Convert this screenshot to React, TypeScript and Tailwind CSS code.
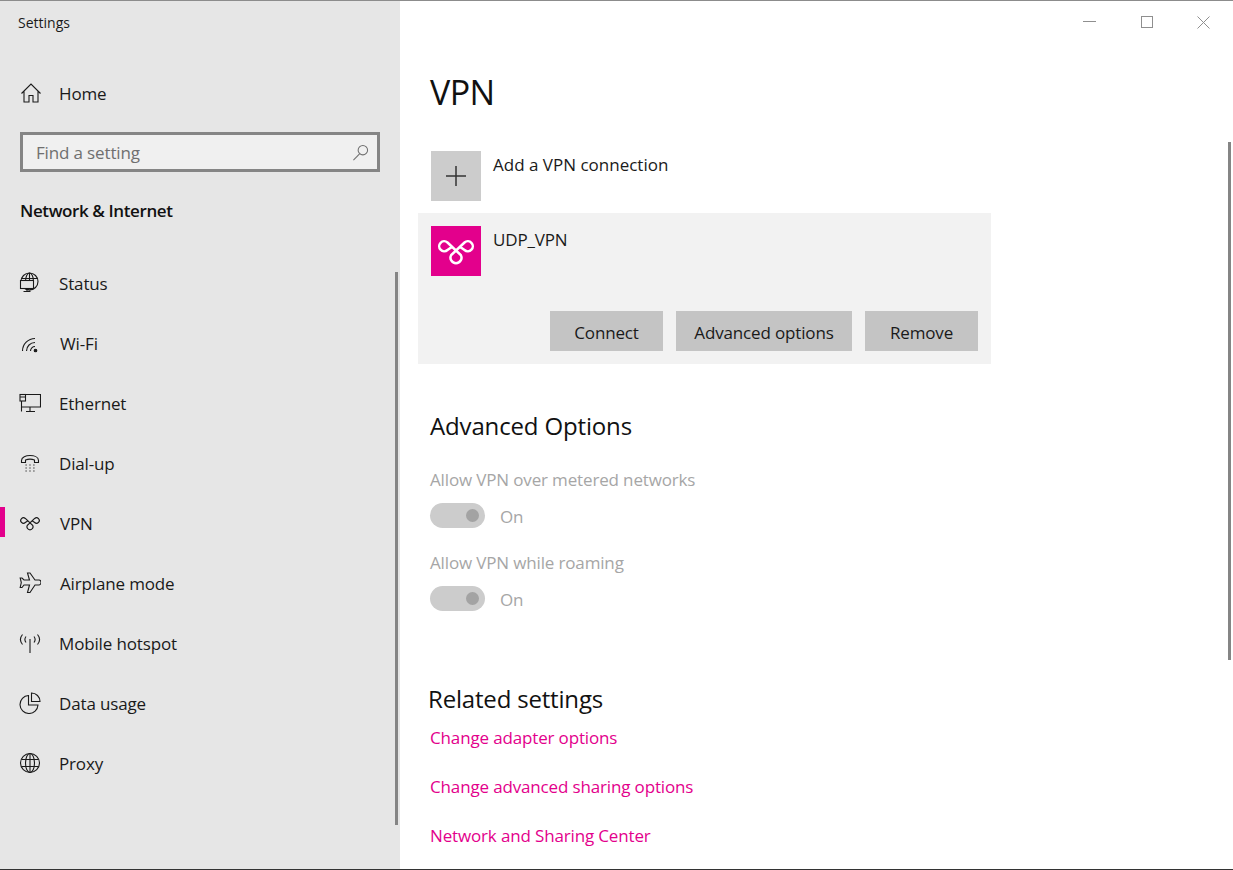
import React from 'react';

const ICON = 'w-[22px] h-[22px] mt-[2px] shrink-0 fill-none stroke-[#1a1a1a] stroke-[1.1]';
const VPN_PATH =
  'M21.500 20.500 L16.500 24 A5 5 0 1 1 16.500 16.500 L29.800 29 A5.500 5.500 0 1 1 20.200 29 L33.500 16.500 A5 5 0 1 1 33.500 24 L28.500 20.500';

const NAV: Array<{ label: string; icon: React.ReactNode; active?: boolean; offset?: string }> = [
  {
    label: 'Status',
    icon: (
      <svg viewBox="0 0 22 22" className={ICON}>
        <circle cx="10.500" cy="9.500" r="8.500" />
        <ellipse cx="10.500" cy="9.500" rx="4" ry="8.500" />
        <path d="M2.500 6.500h16M10.500 1v8" />
        <rect x="1.500" y="8.500" width="13" height="8" className="fill-[#e6e6e6]" />
        <path d="M8 16.500v3M4.500 19.500h7" />
      </svg>
    ),
  },
  {
    label: 'Wi-Fi',
    offset: 'pl-px',
    icon: (
      <svg viewBox="0 0 22 22" className={ICON}>
        <path d="M3.500 19A12.500 12.500 0 0 1 16 6.500M7.500 19A8.500 8.500 0 0 1 16 10.500M11.500 19A4.500 4.500 0 0 1 16 14.500" />
        <circle cx="16.500" cy="18.500" r="1.300" className="fill-[#1a1a1a]" />
      </svg>
    ),
  },
  {
    label: 'Ethernet',
    icon: (
      <svg viewBox="0 0 22 22" className={ICON}>
        <path d="M6.500 2.500h15v12.500H2.500V9" />
        <rect x="1" y="2.500" width="5.500" height="6.500" />
        <path d="M1 5h5.500M11 15v4M7 19.500h9M2.500 15v4.500" />
      </svg>
    ),
  },
  {
    label: 'Dial-up',
    icon: (
      <svg viewBox="0 0 22 22" className={ICON}>
        <path d="M2.500 10.500V8.500C2.500 5 7 3.500 11 3.500S19.500 5 19.500 8.500v2h-4V8c-2.500-1-6.500-1-9 0v2.500z" />
        <path d="M6.500 13h1.200M10.400 13h1.200M14.300 13h1.200M6.500 16h1.200M10.400 16h1.200M14.300 16h1.200M6.500 19h1.200M10.400 19h1.200M14.300 19h1.200" />
      </svg>
    ),
  },
  {
    label: 'VPN',
    active: true,
    offset: 'pl-px',
    icon: (
      <svg viewBox="5 3 40 40" className="w-[22px] h-[22px] shrink-0 fill-none stroke-[#1a1a1a] stroke-[2.2]">
        <path d={VPN_PATH} />
      </svg>
    ),
  },
  {
    label: 'Airplane mode',
    offset: 'pl-px',
    icon: (
      <svg viewBox="0 0 22 22" className={ICON}>
        <path d="M8.500 1h2.500l5 7h4c1.500 0 2 1.500 2 2.500S21 13 20 13h-4l-5 7.500H8.500l2-7.500H5l-2 2.500H1.200L2.300 10.500 1.200 6H3L5 8h5.500z" />
      </svg>
    ),
  },
  {
    label: 'Mobile hotspot',
    icon: (
      <svg viewBox="0 0 22 22" className={ICON}>
        <path d="M11 7v14M3.500 2.500c-2.500 3-2.500 7 0 10M18.500 2.500c2.500 3 2.500 7 0 10M7 4.500c-1.500 2-1.500 4 0 6M15 4.500c1.500 2 1.500 4 0 6" />
      </svg>
    ),
  },
  {
    label: 'Data usage',
    icon: (
      <svg viewBox="0 0 22 22" className={ICON}>
        <path d="M9.500 3.500a9 9 0 1 0 9.500 9.500H9.500z" />
        <path d="M12.500 1a8.500 8.500 0 0 1 8.500 8.500h-8.500z" />
      </svg>
    ),
  },
  {
    label: 'Proxy',
    icon: (
      <svg viewBox="0 0 22 22" className={ICON}>
        <circle cx="11" cy="11" r="9.500" />
        <ellipse cx="11" cy="11" rx="4.500" ry="9.500" />
        <path d="M11 1.500v19M2.500 7.500h17M2.500 14.500h17" />
      </svg>
    ),
  },
];

function NavRow({ label, icon, active, offset }: (typeof NAV)[number]) {
  return (
    <div className="relative flex items-center h-[60px] pl-[19px]">
      {active && <div className="absolute left-0 top-[15px] w-[5px] h-[30px] bg-[#e3008c]" />}
      {icon}
      <span className={`ml-[18px] mt-[4px] text-[17px] text-[#1a1a1a] tracking-[-0.15px] ${offset ?? ''}`}>{label}</span>
    </div>
  );
}

function Toggle() {
  return (
    <div className="flex items-center h-[25px]">
      <div className="flex items-center justify-end w-[55px] h-[25px] rounded-full bg-[#cccccc] pr-[6px]">
        <div className="w-[13px] h-[13px] rounded-full bg-[#a3a3a3]" />
      </div>
      <span className="ml-[15px] mt-[2px] text-[17px] text-[#a6a6a6] tracking-[-0.15px]">On</span>
    </div>
  );
}

export default function App() {
  return (
    <div className="relative flex w-[1233px] h-[870px] overflow-hidden bg-white border-t border-b border-t-[#8c8c8c] border-b-[#333333] font-['Open_Sans','Noto_Sans',sans-serif]">
      <aside className="relative w-[400px] shrink-0 bg-[#e6e6e6]">
        <div className="pl-[18px] pt-[11px] h-[62px] text-[14px] leading-[22px] text-[#1a1a1a]">Settings</div>

        <div className="flex items-center h-[60px] pl-[20px]">
          <svg viewBox="0 0 22 22" className="w-[22px] h-[22px] shrink-0 fill-none stroke-[#1a1a1a] stroke-[1.1]">
            <path d="M1.500 11.500 11 2l9.500 9.500M4 9v11h5v-6.500h4V20h5V9" />
          </svg>
          <span className="ml-[17px] mt-[2px] text-[17px] text-[#1a1a1a] tracking-[-0.15px]">Home</span>
        </div>

        <div className="flex items-center justify-between mt-[9px] ml-[20px] w-[360px] h-[40px] border-[3px] border-[#858585] bg-[#f0f0f0] pl-[13px] pr-[8px]">
          <span className="mt-px text-[17px] text-[#6f6f6f] tracking-[-0.15px]">Find a setting</span>
          <svg viewBox="0 0 18 18" className="w-[17px] h-[17px] fill-none stroke-[#6f6f6f] stroke-[1.1]">
            <circle cx="11.500" cy="6.500" r="5" />
            <path d="M8 10.500 1.500 17" />
          </svg>
        </div>

        <div className="mt-[26px] pl-[20px] text-[17px] leading-[26px] font-semibold text-[#111111] tracking-[-0.4px]">Network &amp; Internet</div>

        <nav className="mt-[28px]">
          {NAV.map((item) => (
            <NavRow key={item.label} {...item} />
          ))}
        </nav>

        <div className="absolute left-[395px] top-[271px] w-[3px] h-[553px] bg-[#858585]" />
      </aside>

      <main className="relative flex-1 pl-[30px]">
        <div className="absolute right-[2px] top-[141px] w-[3px] h-[518px] bg-[#858585]" />

        <div className="absolute right-px top-0 flex items-center h-[42px]">
          <div className="flex items-center justify-center w-[57px] h-[42px]">
            <div className="w-[13px] h-px mb-[2px] bg-[#8f8f8f]" />
          </div>
          <div className="flex items-center justify-center w-[57px] h-[42px]">
            <div className="w-[12px] h-[12px] border border-[#8f8f8f]" />
          </div>
          <div className="flex items-center justify-center w-[57px] h-[42px]">
            <svg viewBox="0 0 13 13" className="w-[13px] h-[13px] fill-none stroke-[#8f8f8f] stroke-1">
              <path d="M.5.500l12 12M12.500.500l-12 12" />
            </svg>
          </div>
        </div>

        <h1 className="pt-[64px] h-[150px] text-[34px] leading-[54px] text-[#111111] tracking-[-0.6px]">VPN</h1>

        <div className="flex h-[62px] pl-px">
          <div className="flex items-center justify-center w-[50px] h-[50px] bg-[#cccccc]">
            <svg viewBox="0 0 22 22" className="w-[22px] h-[22px] fill-none stroke-[#333333] stroke-[1.5]">
              <path d="M11 1v20M1 11h20" />
            </svg>
          </div>
          <span className="ml-[12px] text-[17px] leading-[27px] text-[#1a1a1a]">Add a VPN connection</span>
        </div>

        <div className="ml-[-12px] w-[573px] h-[151px] bg-[#f2f2f2] pt-[13px] pl-[13px] pr-[13px]">
          <div className="flex h-[85px]">
            <div className="w-[50px] h-[50px] bg-[#e3008c]">
              <svg viewBox="0 0 50 50" className="w-[50px] h-[50px] fill-none stroke-white stroke-[2.5]">
                <path d={VPN_PATH} />
              </svg>
            </div>
            <span className="ml-[12px] text-[17px] leading-[27px] text-[#1a1a1a] tracking-[-0.15px]">UDP_VPN</span>
          </div>
          <div className="flex justify-end gap-[13px]">
            <button className="w-[113px] h-[40px] pt-[3px] bg-[#c4c4c4] text-[17px] text-[#1a1a1a] tracking-[-0.15px]">Connect</button>
            <button className="w-[176px] h-[40px] pt-[3px] bg-[#c4c4c4] text-[17px] text-[#1a1a1a] tracking-[-0.15px]">Advanced options</button>
            <button className="w-[113px] h-[40px] pt-[3px] bg-[#c4c4c4] text-[17px] text-[#1a1a1a] tracking-[-0.15px]">Remove</button>
          </div>
        </div>

        <h2 className="mt-[43px] text-[24px] leading-[38px] text-[#111111] tracking-[-0.15px]">Advanced Options</h2>

        <div className="mt-[21px] text-[17px] leading-[27px] text-[#a6a6a6] tracking-[-0.15px]">Allow VPN over metered networks</div>
        <div className="mt-[10px]"><Toggle /></div>
        <div className="mt-[21px] text-[17px] leading-[27px] text-[#a6a6a6] tracking-[-0.15px]">Allow VPN while roaming</div>
        <div className="mt-[10px]"><Toggle /></div>

        <h2 className="mt-[69px] ml-[-2px] text-[24px] leading-[38px] text-[#111111] tracking-[-0.18px]">Related settings</h2>

        <div className="flex flex-col gap-[22px] mt-[6px] text-[17px] leading-[27px] text-[#e3008c] tracking-[-0.15px]">
          <span>Change adapter options</span>
          <span>Change advanced sharing options</span>
          <span>Network and Sharing Center</span>
        </div>
      </main>
    </div>
  );
}
